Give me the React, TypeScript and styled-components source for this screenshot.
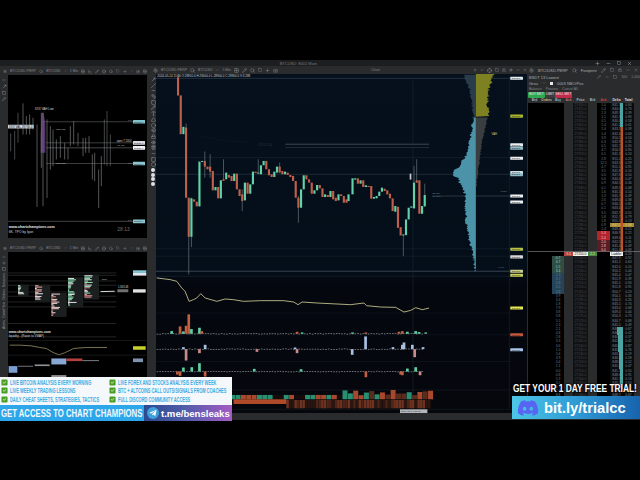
import React from "react";
import styled, { createGlobalStyle } from "styled-components";
import {
  Settings, Search, Plus, Minus, Square, X, Grid2x2, Camera, Pencil, Slash, Type, Circle,
  MoveUpRight, Triangle, Ruler, Magnet, Lock, Eye, Trash2, ChevronDown, LineChart, Crosshair,
} from "lucide-react";
import { FaDiscord, FaTelegramPlane } from "react-icons/fa";
import { FaSquareCheck } from "react-icons/fa6";

const GlobalStyle = createGlobalStyle`
  html, body { margin: 0; padding: 0; background: #000; }
  body { font-family: "Liberation Sans", Arial, sans-serif; overflow: hidden; }
`;

/* repeatable noise so that the profile and the ladder keep their shape */
const makeNoise = (seed: number) => {
  let s = seed;
  return () => {
    s = (s * 16807) % 2147483647;
    return (s - 1) / 2147483646;
  };
};

const Page = styled.div`
  position: relative;
  width: 640px;
  height: 480px;
  background: #000;
  display: flex;
  flex-direction: column;
  overflow: hidden;
`;
const Letterbox = styled.div`
  height: 60px;
  flex: none;
  background: #000;
`;
const Terminal = styled.div`
  height: 360px;
  flex: none;
  background: #2a2b2d;
  display: flex;
  flex-direction: column;
`;
const TitleBar = styled.div`
  height: 6px;
  flex: none;
  background: #1d1e20;
  display: flex;
  align-items: center;
  justify-content: flex-end;
  gap: 6px;
  padding-right: 8px;
  position: relative;
  color: #b5b5b5;
`;
const TitleText = styled.span`
  font-size: 4px;
  color: #77797c;
  margin-right: 272px;
`;
const Workspace = styled.div`
  flex: 1;
  display: grid;
  grid-template-columns: 150px 377px 113px;
  min-height: 0;
`;
const LeftColumn = styled.div`
  display: flex;
  flex-direction: column;
  gap: 6px;
  padding-top: 1px;
  min-height: 0;
`;
const ChartWindow = styled.div<{ $h: number }>`
  height: ${(p) => p.$h}px;
  flex: none;
  display: flex;
  flex-direction: column;
  padding-right: 3px;
`;
const CenterWindow = styled.div`
  display: flex;
  flex-direction: column;
  min-height: 0;
`;
const Toolbar = styled.div`
  height: 8px;
  flex: none;
  display: flex;
  align-items: center;
  gap: 3px;
  padding-left: 3px;
  color: #8f9194;
  overflow: hidden;
  white-space: nowrap;
`;
const ToolText = styled.span`
  font-size: 3.5px;
  color: #838588;
`;
const ToolSpacer = styled.span`
  flex: 1;
`;
const ChartRow = styled.div`
  flex: 1;
  display: flex;
  min-height: 0;
`;
const Rail = styled.div<{ $w: number; $gap: number }>`
  width: ${(p) => p.$w}px;
  flex: none;
  display: flex;
  flex-direction: column;
  align-items: center;
  gap: ${(p) => p.$gap}px;
  padding-top: 3px;
  color: #a8aaad;
  overflow: hidden;
`;
const RailDot = styled.span`
  width: 4px;
  height: 4px;
  flex: none;
  border-radius: 50%;
  background: #dfe1e3;
`;
const RailWord = styled.span`
  writing-mode: vertical-rl;
  transform: rotate(180deg);
  font-size: 3.5px;
  color: #9a9c9f;
`;
const Canvas = styled.div<{ $navy?: boolean }>`
  flex: 1;
  min-width: 0;
  background: ${(p) =>
    p.$navy ? "linear-gradient(180deg,#05101c 0%,#040e19 58%,#04070e 62%,#05070d 100%)" : "#000"};
  & > svg {
    display: block;
    width: 100%;
    height: 100%;
  }
`;
const CenterFooter = styled.div`
  height: 7px;
  flex: none;
`;
const ChartText = styled.text<{ $size?: number; $c?: string; $w?: number }>`
  font-family: "Liberation Sans", Arial, sans-serif;
  font-size: ${(p) => p.$size ?? 10}px;
  fill: ${(p) => p.$c ?? "#c9cbcd"};
  font-weight: ${(p) => p.$w ?? 400};
`;

/* ---------- order ladder ---------- */
const LadderWindow = styled.div`
  display: flex;
  flex-direction: column;
  padding-left: 1px;
  min-height: 0;
  min-width: 0;
`;
const LadderHead = styled.div`
  height: 6px;
  flex: none;
  display: flex;
  align-items: center;
  gap: 4px;
  padding-left: 1px;
  color: #8f9194;
  white-space: nowrap;
  overflow: hidden;
`;
const LadderTabs = styled(LadderHead)`
  height: 8px;
`;
const LadderTitle = styled.span`
  font-size: 4px;
  color: #a9abad;
`;
const CheckMark = styled.span`
  width: 3px;
  height: 3px;
  background: #e8e8e8;
  flex: none;
`;
const OrderButtons = styled.div`
  height: 5.5px;
  flex: none;
  display: flex;
  align-items: stretch;
`;
const OrderButton = styled.span<{ $bg: string; $w: number }>`
  width: ${(p) => p.$w}px;
  background: ${(p) => p.$bg};
  color: #e8e8e8;
  font-size: 3.3px;
  line-height: 5.5px;
  text-align: center;
  border-radius: 1px;
`;
const LadderGrid = styled.div`
  flex: 1;
  margin-top: 0.5px;
  min-height: 0;
  overflow: hidden;
`;
const LadderRow = styled.div<{ $h: number; $line?: boolean }>`
  height: ${(p) => p.$h}px;
  display: grid;
  grid-template-columns: 13px 11px 12px 9px 15px 9px 13px 13px 11px;
  box-shadow: ${(p) => (p.$line ? "0 -0.7px 0 #77797b" : "none")};
  position: relative;
`;
const Cell = styled.div<{ $bg?: string; $c?: string; $edge?: string }>`
  position: relative;
  background: ${(p) => p.$bg ?? "#000"};
  color: ${(p) => p.$c ?? "#9b9d9f"};
  font-size: 3.3px;
  line-height: 4.17px;
  text-align: center;
  overflow: hidden;
  white-space: nowrap;
  box-shadow: ${(p) => (p.$edge ? `inset -2.5px 0 0 ${p.$edge}` : "none")};
`;
const HeadCell = styled(Cell)`
  line-height: 4.5px;
  background: #2c2d2f;
  font-weight: 700;
`;
const DepthBar = styled.span<{ $c: string }>`
  position: absolute;
  top: 0;
  right: 0;
  bottom: 0;
  background: ${(p) => p.$c};
`;
const CellValue = styled.span`
  position: relative;
`;

/* ---------- promo overlays ---------- */
const PromoLeft = styled.div`
  position: absolute;
  left: 0;
  top: 377px;
  width: 232px;
  height: 43px;
  display: flex;
  flex-direction: column;
`;
const PerkPanel = styled.div`
  height: 27px;
  flex: none;
  background: #f4f8fa;
  display: grid;
  grid-template-columns: 108px 124px;
  grid-auto-rows: 8.6px;
  padding-top: 1px;
  overflow: hidden;
`;
const Perk = styled.div`
  display: flex;
  align-items: center;
  gap: 2px;
  padding-left: 1px;
  color: #4a9e22;
  font-size: 7px;
  & > svg {
    flex: none;
  }
`;
const PerkText = styled.span`
  display: inline-block;
  width: max-content;
  font-size: 6.6px;
  font-weight: 700;
  color: #3cabe2;
  transform: scaleX(0.6);
  transform-origin: left center;
  white-space: nowrap;
`;
const CallBar = styled.div`
  height: 16px;
  flex: none;
  display: flex;
`;
const CallLeft = styled.div`
  width: 144px;
  background: #2ea6ea;
  display: flex;
  align-items: center;
  overflow: hidden;
`;
const CallText = styled.span`
  display: inline-block;
  width: max-content;
  font-size: 10.6px;
  font-weight: 700;
  color: #f2f8fc;
  transform: scaleX(0.73);
  transform-origin: left center;
  margin-left: 1px;
  white-space: nowrap;
`;
const CallRight = styled.div`
  flex: 1;
  background: linear-gradient(90deg, #2a4a90 0%, #4f5ca8 45%, #a45cc4 100%);
  display: flex;
  align-items: center;
  gap: 2px;
  padding-left: 3px;
`;
const TelegramBadge = styled.span`
  width: 12px;
  height: 12px;
  border-radius: 50%;
  background: #3f9fdc;
  color: #fff;
  display: flex;
  align-items: center;
  justify-content: center;
  font-size: 8px;
  flex: none;
`;
const Handle = styled.span`
  font-size: 9.6px;
  font-weight: 700;
  color: #fff;
  white-space: nowrap;
`;
const PromoRight = styled.div`
  position: absolute;
  left: 512px;
  top: 381px;
  width: 128px;
  display: flex;
  flex-direction: column;
`;
const TrialText = styled.span`
  display: inline-block;
  width: max-content;
  font-size: 11px;
  line-height: 15px;
  font-weight: 700;
  color: #fff;
  text-shadow: 0 0 2px #000, 0 0 2px #000;
  transform: scaleX(0.76);
  transform-origin: left center;
  margin-left: 1px;
  white-space: nowrap;
`;
const LinkBar = styled.div`
  height: 23px;
  background: linear-gradient(90deg, #4cc6e6 0%, #2f9ad4 50%, #1763ae 100%);
  display: flex;
  align-items: center;
  gap: 5px;
  padding-left: 5px;
  color: #5865f2;
  font-size: 22px;
`;
const LinkText = styled.span`
  font-size: 14.7px;
  font-weight: 700;
  color: #fff;
  white-space: nowrap;
`;

/* ---------- main chart data (third-of-a-pixel units) ---------- */
type Candle = [number, number, number, "g" | "r", number?, number?];
const firstRun: Candle[] = [
  [84, 70, 124, "r", 60, 125], [92, 124, 240, "r"], [100, 218, 240, "g"], [108, 220, 430, "r", 208],
  [116, 430, 547, "r", 430, 660], [124, 432, 547, "g", 430, 578], [132, 435, 442, "r"], [140, 442, 456, "r"],
  [148, 322, 456, "g"], [156, 320, 323, "g"], [164, 320, 337, "r", 292, 370], [172, 337, 345, "r"],
  [180, 337, 352, "r", 300, 370], [188, 350, 408, "r"], [196, 398, 408, "g"], [204, 398, 432, "r"],
  [212, 378, 432, "g"], [220, 375, 380, "r", 315], [228, 355, 375, "g"], [236, 362, 370, "r"],
  [244, 365, 380, "r"], [252, 358, 380, "g"], [260, 358, 405, "r"], [268, 405, 425, "r"],
  [276, 420, 440, "r", 405, 470], [284, 385, 438, "g"], [292, 385, 418, "r"], [300, 390, 418, "g"],
  [308, 352, 390, "g"], [316, 352, 356, "r"], [324, 355, 358, "g", 315], [332, 333, 360, "g"],
  [340, 320, 333, "g"], [348, 320, 345, "r"], [356, 345, 363, "r"], [364, 360, 368, "r"],
  [372, 352, 368, "g"], [380, 337, 355, "g"], [388, 337, 355, "r", 325], [396, 350, 360, "r"],
  [404, 352, 360, "g"], [412, 355, 362, "r"], [420, 362, 368, "r"], [428, 365, 380, "r"],
  [436, 380, 430, "r"], [444, 430, 460, "r", 425, 505], [452, 405, 460, "g"], [460, 363, 405, "g"],
  [468, 363, 375, "r"], [476, 375, 385, "r"], [484, 385, 418, "r"], [492, 408, 418, "g"],
  [500, 392, 408, "g"], [508, 392, 402, "r"], [516, 402, 428, "r"], [524, 420, 428, "g"],
  [532, 422, 428, "r"], [540, 410, 428, "g"], [548, 410, 435, "r"], [556, 430, 440, "r"],
  [564, 420, 438, "g"], [572, 420, 425, "r"], [580, 425, 445, "r"], [588, 435, 445, "r"],
];
const lateRun: Candle[] = [
  [24, 420, 440, "g"], [36, 372, 420, "g"], [44, 372, 376, "g"], [52, 372, 388, "r"], [60, 378, 388, "g"],
  [68, 378, 398, "r"], [76, 393, 398, "g"], [84, 395, 398, "r"], [92, 395, 433, "r"], [100, 428, 433, "g"],
  [108, 425, 432, "g"], [116, 412, 425, "g"], [124, 400, 412, "g"], [132, 403, 410, "r"], [140, 408, 420, "r"],
  [148, 418, 432, "r"], [156, 432, 470, "r"], [164, 455, 472, "g"], [172, 457, 520, "r"], [180, 518, 543, "r"],
  [188, 540, 543, "g", 540, 605], [196, 495, 542, "g"], [204, 460, 495, "g"], [212, 456, 460, "g"],
  [220, 385, 462, "g", 335], [228, 378, 385, "r", 315], [236, 378, 478, "r"], [244, 455, 478, "g"],
  [252, 422, 456, "g", 388],
];
const candles: Candle[] = [
  ...firstRun,
  ...lateRun.map(([x, t, b, c, u, d]) => [x + 570, t, b, c, u, d] as Candle),
];

const pn = makeNoise(4711);
const lerp = (stops: number[][], y: number) => {
  for (let i = 1; i < stops.length; i++) {
    if (y <= stops[i][0]) {
      const [y0, x0] = stops[i - 1];
      const [y1, x1] = stops[i];
      return x0 + ((x1 - x0) * (y - y0)) / (y1 - y0);
    }
  }
  return stops[stops.length - 1][1];
};
const jagged = (from: number, to: number, edge: number, stops: number[][], spread: number) => {
  const pts: string[] = [`${edge},${from}`];
  for (let y = from; y <= to; y += 3) {
    const x = lerp(stops, y) + (pn() - 0.5) * spread;
    pts.push(`${x.toFixed(1)},${y}`);
  }
  pts.push(`${edge},${to}`);
  return pts.join(" ");
};
const P = 570;
const tealProfile = jagged(190, 650, P + 405, [
  [190, P + 398], [250, P + 388], [300, P + 378], [335, P + 355], [360, P + 332], [372, P + 352],
  [420, P + 372], [500, P + 376], [560, P + 385], [600, P + 398], [650, P + 403],
], 9);
const duskProfile = jagged(62, 190, P + 405, [[62, P + 368], [110, P + 388], [190, P + 398]], 7);
const oliveProfile = jagged(60, 188, P + 405, [[60, P + 458], [100, P + 445], [150, P + 440], [188, P + 445]], 10);
const ashProfile = jagged(190, 400, P + 405, [[190, P + 440], [270, P + 422], [400, P + 406]], 4);

const priceLine =
  "20,25 60,30 80,35 95,55 105,65 117,95 130,90 140,85 152,72 165,85 200,95 225,88 250,90 280,95 330,93 400,93 430,97 443,105 455,97 500,100 600,105 640,100 648,108 690,112 735,113 760,127 780,122 795,114 815,120 835,115";

type PaneBar = [number, number, number, string];
const BL = "#a8bfe0";
const PK = "#c98a88";
const RD = "#c45f42";
const GN = "#5fcfa5";
const paneBars: PaneBar[] = [
  [65, 184, 192, GN], [90, 170, 192, RD], [100, 185, 192, GN], [108, 168, 192, RD], [116, 134, 192, RD],
  [124, 178, 192, GN], [148, 174, 192, GN], [155, 184, 192, RD], [440, 186, 192, RD], [455, 188, 192, GN],
  [606, 188, 192, GN], [646, 188, 192, RD], [745, 186, 192, RD], [755, 184, 192, RD], [770, 186, 192, GN],
  [795, 184, 192, GN], [805, 187, 192, GN], [825, 188, 192, GN],
  [108, 238, 272, PK], [100, 232, 238, BL], [148, 238, 250, PK], [165, 225, 238, BL], [320, 238, 246, PK],
  [440, 238, 250, PK], [434, 233, 238, BL], [645, 200, 238, BL], [605, 238, 255, BL], [727, 232, 238, BL],
  [755, 225, 238, BL], [760, 218, 238, BL], [785, 225, 238, BL], [792, 238, 262, PK], [817, 232, 238, BL],
  [100, 293, 305, GN], [125, 292, 305, GN], [148, 280, 305, GN], [90, 305, 318, RD], [82, 305, 314, RD],
  [165, 305, 320, RD], [312, 297, 305, GN], [452, 298, 305, GN], [646, 305, 322, RD], [750, 305, 314, RD],
  [755, 305, 316, RD], [770, 296, 305, GN], [795, 292, 305, GN], [808, 305, 316, PK],
];
const wn = makeNoise(99);
const baselineTicks = (y: number) =>
  Array.from({ length: 100 }, (_, i) => {
    const x = 20 + i * 8;
    return { x, y: y - wn() * 2 };
  });
const tickRows = [192, 238, 305].flatMap((y) => baselineTicks(y));
const hn = makeNoise(2024);
const heatCells = Array.from({ length: 38 }, (_, i) => {
  const x = 240 + i * 16;
  const roll = hn();
  const late = x > 570;
  const top = late ? 360 + hn() * 16 : 375;
  const c = roll < 0.25 ? "#2a8f70" : roll < 0.62 ? "#a8482c" : late ? "#5a2c1e" : "#160b0a";
  return { x, top, c };
});
const emberCells = Array.from({ length: 54 }, (_, i) => {
  const roll = hn();
  return { x: 408 + i * 8, c: roll < 0.35 ? "#6e3320" : roll < 0.7 ? "#4c2518" : "#2a1610" };
});

type Tag = [number, string];
const tags: Tag[] = [
  [73, "#dfe9ee"], [186, "#a9b52c"], [272, "#e6ecef"], [282, "#8fb9c7"], [312, "#eef0f2"], [355, "#cfe0e8"],
  [361, "#8fb9c7"], [425, "#eef0f2"], [443, "#eef0f2"], [584, "#b6c247"], [607, "#d5d7d9"], [650, "#c9ce8a"],
  [662, "#c8d05a"], [760, "#e8ea55"], [840, "#c4573a"], [885, "#a8c4ea"],
];
const MainChart = () => (
  <svg viewBox="18 60 1110 1014" preserveAspectRatio="none" aria-hidden="false">
    <line x1="18" x2="1080" y1="73" y2="73" stroke="#3d4d5c" strokeWidth="1.6" />
    <line x1="18" x2="1080" y1="310" y2="310" stroke="#1e2b38" strokeWidth="1.4" />
    <line x1="18" x2="1080" y1="360" y2="360" stroke="#35444f" strokeWidth="1.6" />
    <line x1="18" x2="1080" y1="583" y2="583" stroke="#1e2b38" strokeWidth="1.4" />
    <line x1="18" x2="1080" y1="605" y2="605" stroke="#1a2632" strokeWidth="1.4" />
    <line x1="18" x2="1080" y1="650" y2="650" stroke="#4d5c69" strokeWidth="2" />
    <line x1="18" x2="1080" y1="665" y2="665" stroke="#26313c" strokeWidth="1.4" />
    <line x1="405" x2="835" y1="270" y2="270" stroke="#56636f" strokeWidth="2" />
    <line x1="405" x2="835" y1="280" y2="280" stroke="#39454f" strokeWidth="1.6" />
    <line x1="845" x2="1080" y1="425" y2="425" stroke="#4a5964" strokeWidth="1.6" />
    <polyline points="155,248 220,258 290,265" fill="none" stroke="#243140" strokeWidth="1.6" strokeDasharray="2 4" />
    <ChartText x="325" y="274" $size={8} $c="#26323e">123.4 1234</ChartText>
    <line x1="787" x2="787" y1="80" y2="1035" stroke="#1f2c38" strokeWidth="1.6" />
    <line x1="1075" x2="1075" y1="62" y2="1060" stroke="#1c2732" strokeWidth="1.6" />
    <line x1="18" x2="1080" y1="775" y2="775" stroke="#171c26" strokeWidth="1.5" />
    <line x1="18" x2="1080" y1="840" y2="840" stroke="#171c26" strokeWidth="1.5" />
    <line x1="18" x2="1080" y1="920" y2="920" stroke="#171c26" strokeWidth="1.5" />
    <line x1="18" x2="1080" y1="1005" y2="1005" stroke="#1d222c" strokeWidth="1.5" />
    <line x1="18" x2="1080" y1="1063" y2="1063" stroke="#1d222c" strokeWidth="1.5" />

    <polygon points={duskProfile} fill="#2a3b4c" />
    <polygon points={oliveProfile} fill="#7d8122" />
    <polygon points={ashProfile} fill="#3b3e40" />
    <polygon points={tealProfile} fill="#4a93a9" />

    {candles.map(([x, t, b, c, u, d], i) => (
      <g key={i}>
        {(u !== undefined || d !== undefined) && (
          <line x1={x} x2={x} y1={u ?? t} y2={d ?? b} stroke="#7d8a93" strokeWidth="1.7" />
        )}
        <rect x={x - 3.2} y={t} width={6.4} height={Math.max(b - t, 3)} fill={c === "g" ? "#62d2a8" : "#c1604a"} />
      </g>
    ))}
    <rect x="777" y="358" width="5" height="18" fill="#c9cbcd" />
    <ChartText x="845" y="418" $size={7} $c="#8e9aa3">hvl low</ChartText>
    <ChartText x="845" y="429" $size={7} $c="#6c7780">hvl high</ChartText>
    <ChartText x="1048" y="412" $size={7} $c="#7d858c">VPOC</ChartText>
    <ChartText x="1040" y="640" $size={7} $c="#7d858c">VAL 2</ChartText>
    <ChartText x="1022" y="242" $size={8} $c="#c8ca80">VAH</ChartText>
    <ChartText x="22" y="68" $size={9} $c="#d7d9db">2024-05-14 11:00 O:28950.0 H:29000.0 L:28900.0 C:28950.0 V:3.28K</ChartText>

    <polyline points={priceLine} transform="translate(0,645)" fill="none" stroke="#d8d49a" strokeWidth="2.4" />
    <g transform="translate(0,645)">
      {tickRows.map((t, i) => (
        <rect key={i} x={t.x} y={t.y} width="5" height="2.2" fill="#8c8f93" />
      ))}
      {paneBars.map(([x, a, b, c], i) => (
        <rect key={i} x={x - 4} y={a} width="8" height={b - a} fill={c} />
      ))}
      {heatCells.map((h, i) => (
        <rect key={i} x={h.x} y={h.top} width="15" height={388 - h.top} fill={h.c} />
      ))}
      {emberCells.map((h, i) => (
        <rect key={i} x={h.x} y="390" width="7.5" height="25" fill={h.c} />
      ))}
      <rect x="250" y="388" width="158" height="14" fill="#b04a28" />
      <rect x="748" y="418" width="82" height="11" fill="#b3b7bb" />
      <ChartText x="751" y="426.5" $size={7.5} $c="#30343a">2024-05-14 21:30</ChartText>
    </g>

    {tags.map(([y, c], i) => (
      <g key={i}>
        <rect x={1078} y={y - 4.5} width={38} height={9} rx="1" fill={c} />
        <ChartText x={1082} y={y + 2.4} $size={7} $c="#1d2226">29342.5</ChartText>
      </g>
    ))}
  </svg>
);

/* ---------- range chart, upper left ---------- */
const ranges: number[][] = [
  [33, 232, 285], [45, 225, 310], [55, 170, 260], [70, 142, 235], [80, 180, 235], [90, 175, 235], [100, 185, 220],
  [112, 205, 452], [125, 170, 335], [130, 170, 450], [142, 190, 425], [152, 210, 340], [160, 220, 330], [170, 250, 310],
  [182, 240, 305], [195, 260, 310], [205, 275, 310], [212, 210, 270], [222, 195, 265], [235, 230, 270], [250, 245, 300],
  [258, 245, 290], [268, 240, 290], [278, 295, 370], [285, 290, 375], [297, 340, 455], [305, 300, 390], [314, 190, 325],
  [322, 165, 330], [332, 235, 330],
];
const rangeTags: Tag[] = [[197, "#7fc4cc"], [260, "#d8dadc"], [275, "#f2f3f4"], [322, "#8cc7cf"], [495, "#8cc7cf"]];
const RangeChart = () => (
  <svg viewBox="25 57 417 488" preserveAspectRatio="none">
    <polygon points="123,240 126,170 132,170 137,205 137,290 123,290" fill="#6a3f86" opacity="0.8" />
    {ranges.map(([x, a, b], i) => (
      <line key={i} x1={x} x2={x} y1={a} y2={b} stroke={i > 26 || i < 3 ? "#5c5e60" : "#737577"} strokeWidth="2.2" />
    ))}
    <line x1="130" x2="400" y1="197" y2="197" stroke="#77797b" strokeWidth="1.5" />
    <line x1="140" x2="400" y1="260" y2="260" stroke="#77797b" strokeWidth="1.5" />
    <line x1="140" x2="440" y1="275" y2="275" stroke="#8e9092" strokeWidth="1.5" />
    <line x1="140" x2="400" y1="322" y2="322" stroke="#77797b" strokeWidth="1.5" />
    <line x1="25" x2="400" y1="495" y2="495" stroke="#656769" strokeWidth="2" />
    <rect x="25" y="206" width="77" height="11" fill="#d5d7d9" />
    <ChartText x="27" y="215" $size={9} $c="#151515">XXX VAL 29730.0</ChartText>
    <ChartText x="105" y="163" $size={9} $c="#d6d6d6">XXX VAH Low</ChartText>
    <ChartText x="168" y="221" $size={7.5} $c="#cfcfcf">vpoc low</ChartText>
    <ChartText x="168" y="323" $size={7.5} $c="#cfcfcf">vpoc low</ChartText>
    <ChartText x="351" y="257" $size={8} $c="#d0d0d0">open 7 2404</ChartText>
    <ChartText x="353" y="270" $size={7} $c="#b9b9b9">val low</ChartText>
    <ChartText x="384" y="195" $size={7} $c="#b9b9b9">VAL</ChartText>
    <ChartText x="384" y="324" $size={7} $c="#b9b9b9">VAL</ChartText>
    <ChartText x="384" y="494" $size={7} $c="#b9b9b9">VAL</ChartText>
    <ChartText x="27" y="516" $size={11} $c="#e4e4e4" $w={700}>www.chartchampions.com</ChartText>
    <ChartText x="27" y="530" $size={10} $c="#d8d8d8">6K- TPO by Igori</ChartText>
    <ChartText x="353" y="523" $size={15} $c="#6f7173">28:13</ChartText>
    {rangeTags.map(([y, c], i) => (
      <g key={i}>
        <rect x="400" y={y - 5.5} width="36" height="11" rx="1" fill={c} />
        <ChartText x="403" y={y + 3} $size={7.5} $c="#1a1f22">29380.0</ChartText>
      </g>
    ))}
  </svg>
);

/* ---------- footprint chart, lower left ---------- */
const fn = makeNoise(31337);
const clusters = [
  { x: 55, a: 135, b: 165, w: 32, c: ["#e6e6e6", "#c6e8d2"] },
  { x: 106, a: 135, b: 182, w: 46, c: ["#e9a7a5", "#e6e6e6"] },
  { x: 155, a: 160, b: 228, w: 46, c: ["#e48f91", "#f0d0d0"] },
  { x: 205, a: 113, b: 200, w: 46, c: ["#8fe0b6", "#e6e6e6"] },
  { x: 254, a: 105, b: 176, w: 44, c: ["#e6e6e6", "#e48f91", "#8fe0b6"] },
];
const clusterBars = clusters.flatMap((k) =>
  Array.from({ length: Math.floor((k.b - k.a) / 4) }, (_, i) => ({
    x: k.x,
    y: k.a + i * 4,
    w: 3 + fn() * (k.w * 0.5),
    c: k.c[Math.floor(fn() * k.c.length)],
  }))
);
const gridRows = [98, 105, 122, 135, 155, 168, 185, 200, 250, 290];
const FootprintChart = () => (
  <svg viewBox="25 35 417 505" preserveAspectRatio="none">
    {gridRows.map((y, i) => (
      <line key={i} x1="25" x2="350" y1={y} y2={y} stroke="#45474a" strokeWidth="1.5" />
    ))}
    {clusters.map((k, i) => (
      <rect key={i} x={k.x} y={k.a - 2} width={k.w} height={k.b - k.a + 4} fill="#1b1f1f" />
    ))}
    {clusterBars.map((b, i) => (
      <rect key={i} x={b.x} y={b.y} width={b.w} height="3" fill={b.c} />
    ))}
    <line x1="303" x2="345" y1="154" y2="153" stroke="#d8d8d8" strokeWidth="3" />
    <ChartText x="306" y="120" $size={7} $c="#d4d4d4">open</ChartText>
    <ChartText x="355" y="144" $size={8} $c="#d6d6d6">1,843.48</ChartText>
    <rect x="353" y="147" width="33" height="9" fill="#6e7072" />
    <rect x="400" y="90" width="40" height="8" fill="#83c4d0" />
    <rect x="400" y="98" width="40" height="8" fill="#dfe5e8" />
    <rect x="400" y="147" width="38" height="10" fill="#dfe1e3" />
    <ChartText x="27" y="278" $size={10} $c="#e2e2e2" $w={700}>www.chartchampions.com</ChartText>
    <ChartText x="27" y="292" $size={9} $c="#dadada">liquidity - (Route to VWAP)</ChartText>
    <line x1="25" x2="440" y1="301" y2="301" stroke="#2c2e30" strokeWidth="1.5" />
    <polyline
      points="30,315 60,315 95,317 120,322 140,325 160,337 178,344 195,338 222,325 260,322 322,322"
      fill="none"
      stroke="#b6ad78"
      strokeWidth="2"
    />
    <rect x="400" y="318" width="38" height="11" rx="1" fill="#c9d12d" />
    <rect x="400" y="355" width="30" height="11" fill="#7f93ad" />
    <line x1="25" x2="440" y1="345" y2="345" stroke="#2c2e30" strokeWidth="1.5" />
    <rect x="27" y="378" width="26" height="20" fill="#7aa0d2" />
    <rect x="55" y="377" width="45" height="3" fill="#6f7276" />
    <rect x="105" y="373" width="45" height="5" fill="#8d9096" />
    <rect x="155" y="355" width="45" height="18" fill="#88a7d4" />
    <rect x="200" y="355" width="48" height="8" fill="#b4413e" />
    <rect x="248" y="360" width="50" height="3" fill="#7d7f82" />
    <rect x="155" y="405" width="45" height="6" fill="#8d8f92" />
  </svg>
);

/* ---------- ladder rows ---------- */
const rn = makeNoise(8128);
const ROWS = 75;
const CENTER = 36;
const ladder = Array.from({ length: ROWS }, (_, i) => {
  const price = (27430 - i * 5).toFixed(1);
  const size = (rn() * (i % 7 === 0 ? 16 : 6)).toFixed(1);
  const delta = (840 + rn() * 12).toFixed(1);
  const total = (rn() * 0.9 + 0.1).toFixed(2);
  return { i, price, size, delta, total };
});

const Ladder = () => (
  <LadderGrid>
    <LadderRow $h={4.5}>
      <HeadCell $c="#b0b2b4">Bid</HeadCell>
      <HeadCell $c="#c9b98d">Orders</HeadCell>
      <HeadCell $c="#7fb8c4">Buy</HeadCell>
      <HeadCell $c="#c46a63">Ask</HeadCell>
      <HeadCell $c="#b0b2b4">Price</HeadCell>
      <HeadCell $c="#b0b2b4">Bid</HeadCell>
      <HeadCell $c="#c4403b">Ask</HeadCell>
      <HeadCell $c="#dcdcdc">Delta</HeadCell>
      <HeadCell $c="#e8e8e8">Total</HeadCell>
    </LadderRow>
    {ladder.map(({ i, price, size, delta, total }) => {
      const above = i < CENTER;
      const gold = i === 29;
      const redCell = i >= 31 && i <= 35;
      const brightRed = i <= 32;
      const lowSide = i > CENTER;
      const isCenter = i === CENTER;
      const deltaBar = i < 6 ? 3 : i >= 54 && i <= 68 ? Math.max(2, 6 - (i - 54) * 0.25) : 0;
      return (
        <LadderRow key={i} $h={4.17} $line={isCenter}>
          <Cell />
          <Cell />
          <Cell
            $bg={lowSide && i < 46 ? (i < 41 ? "#2e4f45" : "#23445a") : undefined}
            $c={i < 41 ? "#a9c9b6" : "#7b7d7f"}
          >
            {lowSide ? size : ""}
          </Cell>
          <Cell $bg={isCenter ? "#b34640" : "#2a2b2d"} $c="#e6c6c4">{isCenter ? "3.4" : ""}</Cell>
          <Cell $bg={isCenter ? "#f0f0f0" : "#111"} $c={isCenter ? "#111" : "#47494b"}>{price}</Cell>
          <Cell $bg={isCenter ? "#4d8a3c" : "#2a2b2d"} $c="#d8ecd0">{isCenter ? "2.2" : ""}</Cell>
          <Cell
            $bg={redCell ? (brightRed ? "#b3242c" : "#5a1d24") : i === CENTER - 1 ? "#3a3a42" : undefined}
            $c={redCell ? "#f0c2c2" : "#77797c"}
          >
            {above ? size : ""}
          </Cell>
          <Cell
            $bg={gold ? "#a98a2e" : isCenter ? "#f2f2f2" : "#0c0c0c"}
            $c={gold ? "#e0cc8a" : isCenter ? "#111" : "#86888a"}
            $edge={above ? "#b9532a" : undefined}
          >
            {deltaBar > 0 && <DepthBar $c="#45a7a4" style={{ width: deltaBar }} />}
            <CellValue>{isCenter ? "Ladder" : delta}</CellValue>
          </Cell>
          <Cell $bg={gold ? "#a98a2e" : "#0a0a0a"} $c={gold ? "#e0cc8a" : "#86888a"}>{total}</Cell>
        </LadderRow>
      );
    })}
  </LadderGrid>
);

const perks = [
  ["LIVE BITCOIN ANALYSIS EVERY MORNING", "LIVE FOREX AND STOCKS ANALYSIS EVERY WEEK"],
  ["LIVE WEEKLY TRADING LESSONS", "BTC + ALTCOINS CALL OUTS/SIGNALS FROM COACHES"],
  ["DAILY CHEAT SHEETS, STRATEGIES, TACTICS", "FULL DISCORD COMMUNITY ACCESS"],
];

const ChartTools = ({ title }: { title: string }) => (
  <Toolbar>
    <Settings size={5} />
    <ToolText>{title}</ToolText>
    <Search size={5} />
    <ToolText>BTCUSD</ToolText>
    <ChevronDown size={4} />
    <ToolText>1 Min</ToolText>
    <Grid2x2 size={5} />
    <LineChart size={5} />
    <Pencil size={5} />
    <Crosshair size={5} />
    <Search size={5} />
    <Square size={4} />
    <Plus size={5} />
    <ChevronDown size={4} />
    <Camera size={5} />
    <Grid2x2 size={5} />
  </Toolbar>
);

const railIcons = [MoveUpRight, Slash, Minus, Ruler, Square, Pencil, Type, Triangle, Circle, Magnet, Lock, Eye, Trash2, Minus, Square, Circle];

export default function App() {
  return (
    <Page>
      <GlobalStyle />
      <Letterbox />
      <Terminal>
        <TitleBar>
          <TitleText>BTCUSD: 8001 Main</TitleText>
          <Plus size={5} />
          <Minus size={5} />
          <Square size={4} />
          <X size={5} />
        </TitleBar>
        <Workspace>
          <LeftColumn>
            <ChartWindow $h={171}>
              <ChartTools title="BTC/USD-PERP" />
              <ChartRow>
                <Rail $w={8} $gap={2}>
                  <Minus size={4} />
                  <MoveUpRight size={5} />
                  <Square size={4} />
                  <Pencil size={4} />
                </Rail>
                <Canvas><RangeChart /></Canvas>
              </ChartRow>
            </ChartWindow>
            <ChartWindow $h={176}>
              <ChartTools title="BTC/USD-PERP" />
              <ChartRow>
                <Rail $w={8} $gap={2}>
                  <Minus size={4} />
                  <Plus size={4} />
                  <Square size={4} />
                  <RailWord>Sessions</RailWord>
                  <RailWord>Orders</RailWord>
                  <RailWord>Data Flow</RailWord>
                  <RailWord>Alerts</RailWord>
                </Rail>
                <Canvas><FootprintChart /></Canvas>
              </ChartRow>
            </ChartWindow>
          </LeftColumn>
          <CenterWindow>
            <Toolbar>
              <Settings size={5} />
              <ToolText>BTC/USD-PERP</ToolText>
              <Search size={5} />
              <ToolText>BTCUSD</ToolText>
              <ChevronDown size={4} />
              <ToolText>5 Min</ToolText>
              <Grid2x2 size={5} />
              <Pencil size={5} />
              <Search size={5} />
              <Square size={4} />
              <Plus size={5} />
              <Camera size={5} />
              <ToolSpacer />
              <ToolText>Chart</ToolText>
              <ToolSpacer />
              <Plus size={4} />
              <Minus size={4} />
              <Crosshair size={5} />
              <Square size={4} />
              <Lock size={4} />
              <Eye size={4} />
              <Minus size={4} />
              <X size={4} />
            </Toolbar>
            <ChartRow>
              <Rail $w={6} $gap={0.7}>
                {railIcons.map((Icon, i) => (
                  <Icon key={i} size={5} />
                ))}
                <RailDot />
                <RailDot />
                <RailDot />
                <RailDot />
              </Rail>
              <Canvas $navy><MainChart /></Canvas>
            </ChartRow>
            <CenterFooter />
          </CenterWindow>
          <LadderWindow>
            <LadderTabs>
              <Settings size={5} />
              <LadderTitle>BTC/USD-PERP</LadderTitle>
              <Search size={5} />
              <LadderTitle>Footprint</LadderTitle>
              <Pencil size={5} />
              <Square size={4} />
              <Lock size={4} />
              <Minus size={4} />
              <X size={4} />
            </LadderTabs>
            <LadderHead>
              <LadderTitle>BSDT 13 Lowest</LadderTitle>
              <ToolSpacer />
              <Pencil size={4} />
              <Minus size={4} />
              <Square size={4} />
              <ToolText>100</ToolText>
              <ToolText>1.000</ToolText>
            </LadderHead>
            <LadderHead>
              <LadderTitle>Grou</LadderTitle>
              <ChevronDown size={4} />
              <CheckMark />
              <LadderTitle>0003 NBO/Pos</LadderTitle>
            </LadderHead>
            <LadderHead>
              <ToolText>Balance</ToolText>
              <ToolText>Position</ToolText>
              <ToolText>Cancel All</ToolText>
            </LadderHead>
            <OrderButtons>
              <OrderButton $bg="#2fa84f" $w={17}>BUY MKT</OrderButton>
              <OrderButton $bg="#3b3c3e" $w={10}>LIMIT</OrderButton>
              <OrderButton $bg="#c02b4c" $w={17}>SELL MKT</OrderButton>
            </OrderButtons>
            <Ladder />
          </LadderWindow>
        </Workspace>
      </Terminal>
      <Letterbox />

      <PromoLeft>
        <PerkPanel>
          {perks.flat().map((p) => (
            <Perk key={p}>
              <FaSquareCheck />
              <PerkText>{p}</PerkText>
            </Perk>
          ))}
        </PerkPanel>
        <CallBar>
          <CallLeft>
            <CallText>GET ACCESS TO CHART CHAMPIONS</CallText>
          </CallLeft>
          <CallRight>
            <TelegramBadge><FaTelegramPlane /></TelegramBadge>
            <Handle>t.me/bensleaks</Handle>
          </CallRight>
        </CallBar>
      </PromoLeft>
      <PromoRight>
        <TrialText>GET YOUR 1 DAY FREE TRIAL!</TrialText>
        <LinkBar>
          <FaDiscord />
          <LinkText>bit.ly/trialcc</LinkText>
        </LinkBar>
      </PromoRight>
    </Page>
  );
}
